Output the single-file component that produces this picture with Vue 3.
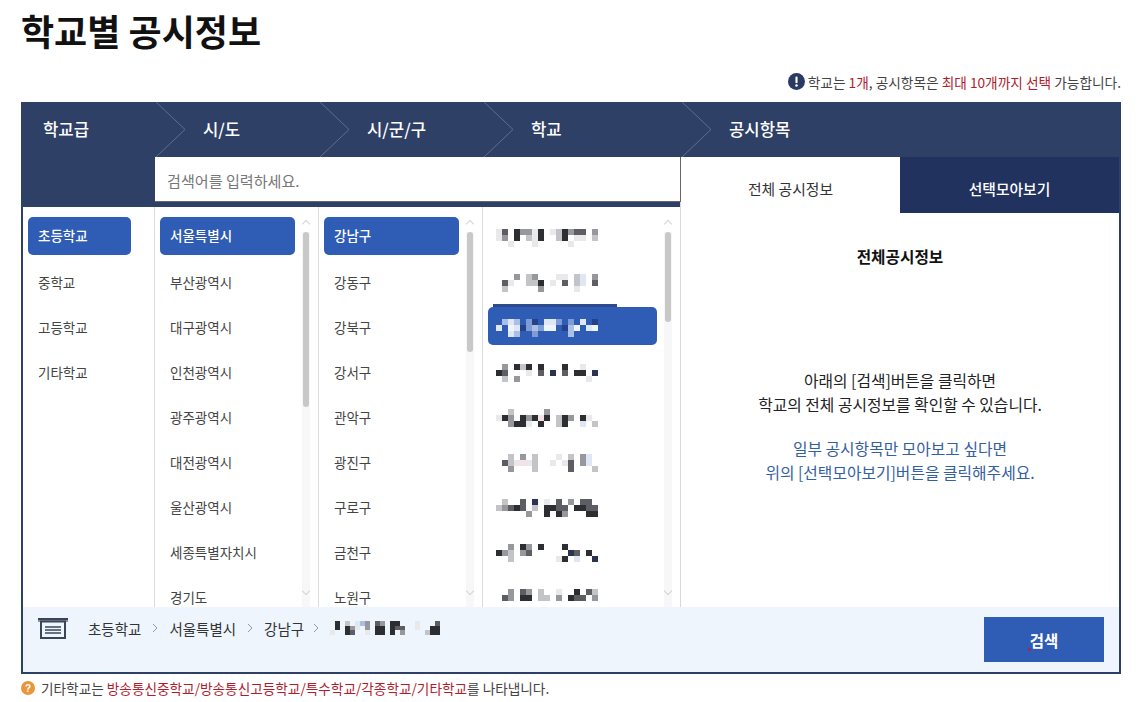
<script setup>
const steps = [
  { label: '학교급', cls: 's1' },
  { label: '시/도', cls: 's2' },
  { label: '시/군/구', cls: 's3' },
  { label: '학교', cls: 's4' },
  { label: '공시항목', cls: 's5' },
]
const levels = ['초등학교', '중학교', '고등학교', '기타학교']
const cities = ['서울특별시', '부산광역시', '대구광역시', '인천광역시', '광주광역시', '대전광역시', '울산광역시', '세종특별자치시', '경기도']
const districts = ['강남구', '강동구', '강북구', '강서구', '관악구', '광진구', '구로구', '금천구', '노원구']
const pal = {
  '.': 'transparent', a: '#e9e9ec', b: '#c4c4c8', c: '#96989c', d: '#5c5e64', e: '#2c2e32',
  f: '#dfe6f4', g: '#a9c0e6', h: '#26408a', i: '#7f9bd6', p: '#f6e2e6', w: '#eef4fc', n: '#2a3350',
}
const cells = (rows, n) => rows.flatMap(r => r.padEnd(n, '.').slice(0, n).split('').map(c => pal[c]))
const schools = [
  ['ad.eccae.abecdd.c', 'ac.e.bae..be.aa.b', '..a...a.....a....'],
  ['...c.bc...aa.bf.c', '.da..bbe.a.d.bf.d', '.b.....c.....a...'],
  ['.gfg.ih.ffi.i.f.h', 'f.wfhigiww.hgw.fw', '..fg..i.....g....'],
  ['.c.ebe.e...e..a..', 'ed...a.d.n.d.ee.n', '.b.c...........a.'],
  ['..b.....c........', 'aec.ecepe.bec.ea.d', '..ceea.e..be..f.b'],
  ['..b.c.b...a.b.cf.', '.dbapab..a.ad.cf.d', '..c...b.....d...b'],
  ['.b..d.n.a.d.c.dd.', 'bcded.b.eedd.eedd.', '.....c..e.ec...ee'],
  ['..c.ec.e...e.....', 'ecb.cd......nd.e.', '..b.......ae.f..n'],
  ['..c.dc.b..a..e.db', '.dc.ee.bb.c.edd.c', '...................'],
]
const selected = 2
const crumbMosaic = cells([
  '.e.b.fgc.dc.ee...a...d',
  '.e.eca.c.ee.edd..a..ee',
  'a..ed..a.ee.e.c....bee',
], 22)
</script>

<template>
  <div class="page">
    <h1 class="title">학교별 공시정보</h1>
    <p class="notice">
      <svg class="ico" viewBox="0 0 16 16" width="17" height="17"><circle cx="8" cy="8" r="8" fill="#2a3a63"/><rect x="7" y="3.2" width="2" height="6.4" rx="1" fill="#fff"/><circle cx="8" cy="11.8" r="1.2" fill="#fff"/></svg>
      <span>학교는 <em>1개</em>, 공시항목은 <em>최대 10개까지 선택</em> 가능합니다.</span>
    </p>

    <section class="panel">
      <header class="steps">
        <div v-for="s in steps" :key="s.label" class="step" :class="s.cls">
          <span>{{ s.label }}</span>
          <svg class="chev" width="46" height="55" viewBox="0 0 46 55"><path d="M1 0 L30 27.5 L1 55" fill="none" stroke="#5f6d8e" stroke-width="1"/></svg>
        </div>
      </header>

      <div class="body">
        <div class="lists">
          <div class="searchrow">
            <div class="search">검색어를 입력하세요.</div>
          </div>
          <div class="cols">
            <ul class="col c1">
              <li v-for="(t, i) in levels" :key="t" :class="{ on: i === 0 }">{{ t }}</li>
            </ul>
            <div class="col c2">
              <ul><li v-for="(t, i) in cities" :key="t" :class="{ on: i === 0 }">{{ t }}</li></ul>
              <div class="sb"><i class="up"></i><b class="th t2"></b><i class="dn"></i></div>
            </div>
            <div class="col c3">
              <ul><li v-for="(t, i) in districts" :key="t" :class="{ on: i === 0 }">{{ t }}</li></ul>
              <div class="sb"><i class="up"></i><b class="th t3"></b><i class="dn"></i></div>
            </div>
            <div class="col c4">
              <ul>
                <li v-for="(m, i) in schools" :key="i" :class="{ on: i === selected }">
                  <span class="mosaic"><u v-for="(c, j) in cells(m, 17)" :key="j" :style="{ background: c }"></u></span>
                </li>
              </ul>
              <div class="sb"><i class="up"></i><b class="th t4"></b><i class="dn"></i></div>
            </div>
          </div>
        </div>

        <aside class="detail">
          <div class="tabs">
            <div class="tab active">전체 공시정보</div>
            <div class="tab">선택모아보기</div>
          </div>
          <h2>전체공시정보</h2>
          <p class="msg">아래의 [검색]버튼을 클릭하면<br>학교의 전체 공시정보를 확인할 수 있습니다.</p>
          <p class="msg blue">일부 공시항목만 모아보고 싶다면<br>위의 [선택모아보기]버튼을 클릭해주세요.</p>
        </aside>
      </div>

      <footer class="foot">
        <div class="crumbs">
          <svg class="box" width="30" height="21" viewBox="0 0 30 21">
            <rect x="0" y="0" width="30" height="2" fill="#3a4658"/>
            <rect x="0" y="2" width="30" height="2" fill="#8a93a0"/>
            <rect x="3" y="3.5" width="24" height="16.5" fill="none" stroke="#3a4658" stroke-width="2"/>
            <path d="M7 9h16M7 12h16M7 15h16" stroke="#3a4658" stroke-width="1.4"/>
          </svg>
          <span>초등학교</span><svg class="gt" width="6" height="10" viewBox="0 0 6 10"><path d="M1 1l4 4-4 4" fill="none" stroke="#999"/></svg>
          <span>서울특별시</span><svg class="gt" width="6" height="10" viewBox="0 0 6 10"><path d="M1 1l4 4-4 4" fill="none" stroke="#999"/></svg>
          <span>강남구</span><svg class="gt last" width="6" height="10" viewBox="0 0 6 10"><path d="M1 1l4 4-4 4" fill="none" stroke="#999"/></svg>
          <span class="mc"><u v-for="(c, j) in crumbMosaic" :key="j" :style="{ background: c }"></u></span>
        </div>
        <button class="go" type="button">검색</button>
      </footer>
    </section>

    <p class="legend">
      <svg viewBox="0 0 14 14" width="14" height="14"><circle cx="7" cy="7" r="7" fill="#e8963c"/><text x="7" y="10.6" text-anchor="middle" font-size="10" font-weight="700" fill="#fff" font-family="Liberation Sans">?</text></svg>
      <span>기타학교는 <em>방송통신중학교/방송통신고등학교/특수학교/각종학교/기타학교</em>를 나타냅니다.</span>
    </p>
  </div>
</template>

<style>
html, body { margin: 0; background: #fff; }
</style>

<style scoped>
.page {
  width: 1100px;
  height: 702px;
  padding-left: 21px;
  overflow: hidden;
  font-family: "Noto Sans CJK KR", "Noto Sans", sans-serif;
  color: #333;
}
.title { margin: 0; padding-top: 7px; height: 64px; box-sizing: border-box; font-size: 36px; line-height: 46px; font-weight: 700; color: #111; }
.notice { margin: 0; height: 30px; display: flex; align-items: center; justify-content: flex-end; gap: 3px; font-size: 13.7px; padding-top: 5px; box-sizing: border-box; color: #444; white-space: nowrap; }
.notice em, .legend em { font-style: normal; color: #b01c2e; }
.panel { margin-top: 8px; height: 572px; box-sizing: border-box; border: 2px solid #2f4066; border-top: 0; display: flex; flex-direction: column; }

.steps { height: 55px; margin: 0 -2px; background: #2f4066; display: flex; flex: none; }
.step { position: relative; color: #fff; font-size: 16.7px; font-weight: 500; display: flex; align-items: center; box-sizing: border-box; padding-bottom: 1px; }
.step .chev { position: absolute; top: 0; left: 100%; }
.s1 { width: 134px; padding-left: 22px; }
.s2 { width: 164px; padding-left: 48px; }
.s3 { width: 164px; padding-left: 48px; }
.s4 { width: 198px; padding-left: 48px; }
.s5 { flex: 1; padding-left: 48px; }
.s5 .chev { display: none; }

.body { flex: 1; display: flex; min-height: 0; }
.lists { width: 658px; display: flex; flex-direction: column; border-right: 1px solid #d9d9d9; box-sizing: border-box; }
.searchrow { flex: none; height: 50px; background: #2f4066; padding-left: 132px; box-sizing: border-box; }
.search { height: 45px; background: #fff; border-right: 1px solid #666; border-bottom: 1px solid #666; box-sizing: border-box; font-size: 15.1px; color: #777; line-height: 46px; padding-left: 12px; margin-right: -1px; }
.cols { flex: 1; display: flex; min-height: 0; }
.col { position: relative; height: 400px; overflow: hidden; box-sizing: border-box; border-right: 1px solid #dcdcdc; }
.c1 { width: 132px; }
.c2, .c3 { width: 164px; }
.c4 { flex: 1; border-right: 0; }
ul { list-style: none; margin: 0; padding: 10px 0 0 5px; }
li { height: 38px; margin-bottom: 7px; padding-left: 10px; box-sizing: border-box; line-height: 40px; font-size: 13.5px; color: #444; border-radius: 5px; white-space: nowrap; }
li.on { background: #2f5cb5; color: #fff; font-weight: 500; line-height: 37px; }
.c1 li { width: 103px; }
.c2 li, .c3 li { width: 135px; }
.c4 li { width: 169px; padding-left: 8px; display: flex; align-items: center; position: relative; }
.c4 li.on::before { content: ""; position: absolute; left: 5px; top: -3px; width: 124px; height: 38px; background: #2f5cb5; border-top: 3px solid #2c4a8c; }

.sb { position: absolute; top: 10px; right: 8px; bottom: 0; width: 8px; background: linear-gradient(#fff 15px, #f7f7f7 15px); }
.sb .up, .sb .dn { position: absolute; left: 1px; width: 6px; height: 6px; box-sizing: border-box; border: solid #d4d4d4; border-width: 1.5px 0 0 1.5px; transform: rotate(45deg); }
.sb .up { top: 4px; }
.sb .dn { top: 371px; transform: rotate(225deg); }
.th { position: absolute; left: 1px; top: 15px; width: 6px; border-radius: 3px; background: #c8c8c8; }
.t2 { height: 175px; }
.t3 { height: 120px; }
.t4 { height: 90px; }

.mosaic { display: grid; grid-template-columns: repeat(17, 6px); grid-auto-rows: 6px; position: relative; top: 2px; }
.mosaic u { display: block; text-decoration: none; }

.detail { flex: 1; min-width: 0; text-align: center; }
.tabs { display: flex; height: 56px; }
.tab { flex: 1; display: flex; align-items: center; justify-content: center; font-size: 14.8px; background: #22325f; color: #fff; font-weight: 500; padding-top: 7px; box-sizing: border-box; }
.tab.active { background: #fff; color: #333; font-weight: 400; }
.detail h2 { margin: 32px 0 0; font-size: 15.7px; line-height: 24px; font-weight: 700; color: #111; }
.msg { margin: 0; font-size: 15.8px; line-height: 24px; color: #222; }
.detail h2 + .msg { margin-top: 100px; }
.msg.blue { margin-top: 20px; color: #33609f; }

.foot { flex: none; height: 65px; background: #eef5fd; display: flex; justify-content: space-between; align-items: flex-start; padding: 10px 15px 0 15px; box-sizing: border-box; }
.crumbs { display: flex; align-items: center; height: 22px; font-size: 14.5px; color: #333; white-space: nowrap; }
.box { margin-right: 20px; }
.gt { margin: 0 11px; }
.gt.last { margin: 0 11px 0 9px; }
.mc { display: grid; grid-template-columns: repeat(22, 5px); grid-auto-rows: 4.5px; }
.mc u { display: block; text-decoration: none; }
.go { position: relative; width: 120px; height: 45px; border: 0; background: #2f5cb5; color: #fff; font: 700 15.5px "Noto Sans CJK KR", sans-serif; padding: 0; }
.go::after { content: ""; position: absolute; left: 44px; top: 31px; width: 3px; height: 3px; border-radius: 50%; background: #b02048; }

.legend { margin: 0; height: 28px; display: flex; align-items: center; gap: 6px; font-size: 13.65px; color: #444; white-space: nowrap; }
</style>
